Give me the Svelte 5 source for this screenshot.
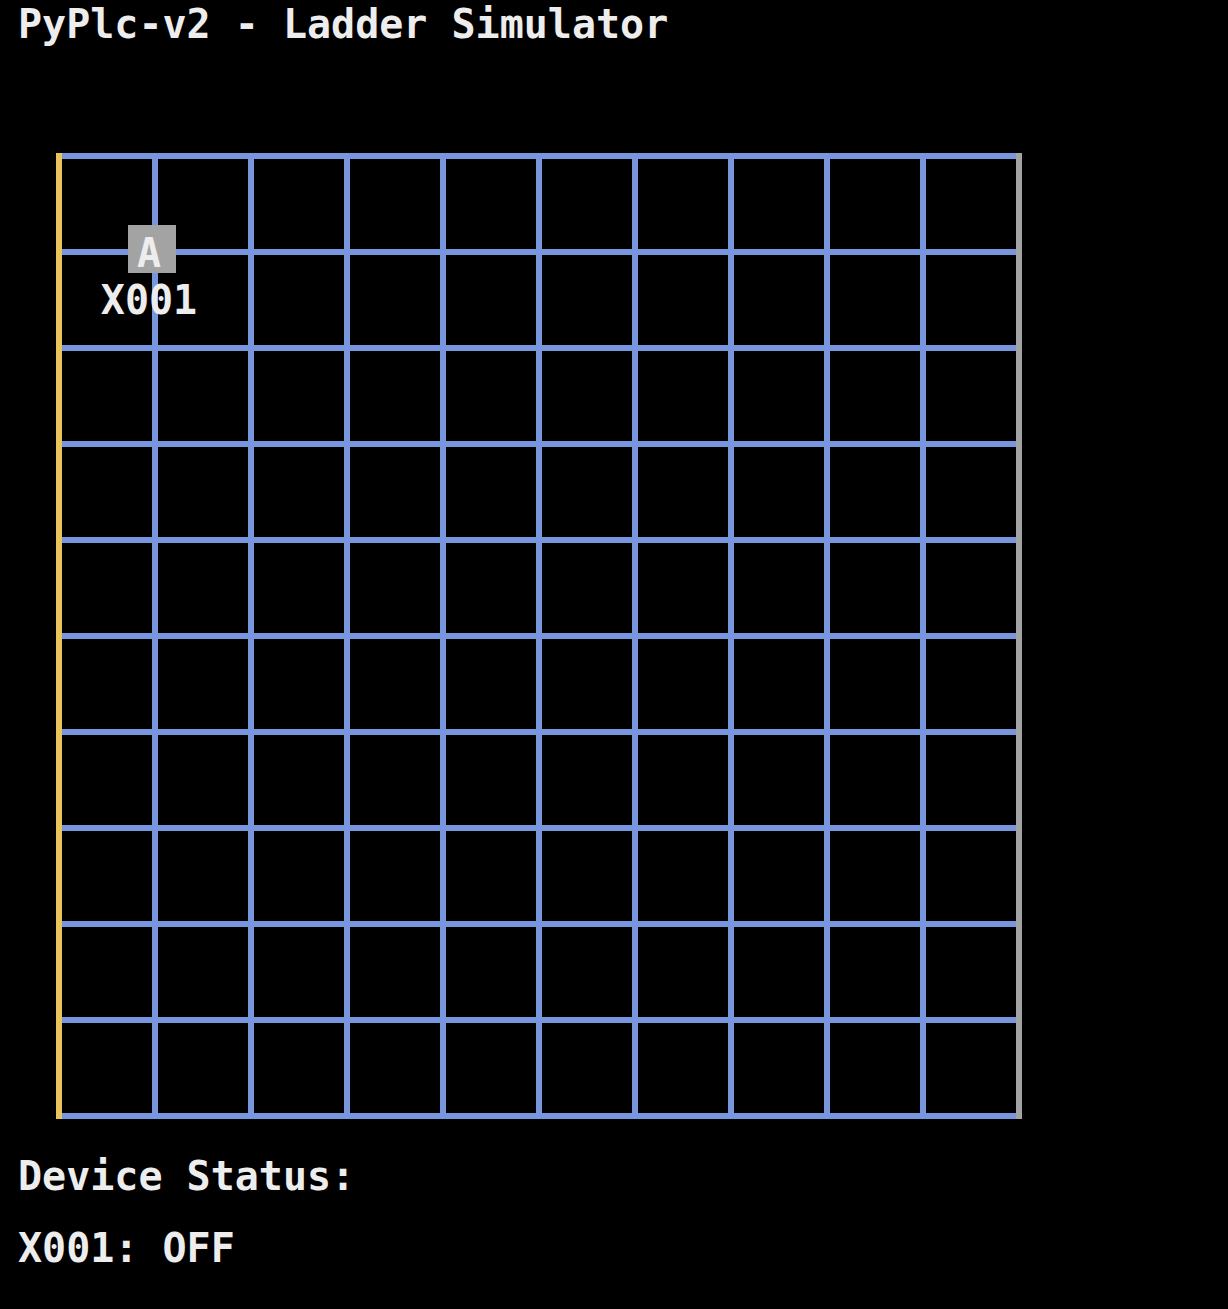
<script>
  const size = 10;
  const cells = Array.from({ length: size * size }, (_, i) => i);
  let devices = $state([{ address: 'X001', symbol: 'A', col: 1, row: 1, on: false }]);
</script>

<svelte:head><title>PyPlc-v2 - Ladder Simulator</title></svelte:head>

<main>
  <h1>PyPlc-v2 - Ladder Simulator</h1>

  <section class="board" aria-label="Ladder grid">
    {#each cells as cell (cell)}
      <div class="cell"></div>
    {/each}
    {#each devices as device (device.address)}
      <div class="device" style="--col: {device.col}; --row: {device.row}">
        <button
          type="button"
          aria-label={`${device.symbol} ${device.address}`}
          aria-pressed={device.on}
          onclick={() => (device.on = !device.on)}>{device.symbol}</button>
        <span class="address">{device.address}</span>
      </div>
    {/each}
  </section>

  <section class="status">
    <h2>Device Status:</h2>
    {#each devices as device (device.address)}
      <p>{device.address}: {device.on ? 'ON' : 'OFF'}</p>
    {/each}
  </section>
</main>

<style>
  :global(body) {
    margin: 0;
    background: #000;
  }

  main {
    box-sizing: border-box;
    min-height: 100vh;
    background: #000;
    color: #ededed;
    font: bold 40px/48px 'DejaVu Sans Mono', monospace;
  }

  h1,
  h2,
  p {
    margin: 0;
    font: inherit;
  }

  h1 {
    padding: 0 18px;
  }

  .board {
    position: relative;
    box-sizing: border-box;
    display: grid;
    grid-template-columns: repeat(10, 1fr);
    gap: 6px;
    margin: 105px 206px 0 56px;
    padding: 6px 0;
    border: solid;
    border-width: 0 6px;
    border-color: transparent #a3a3a3 transparent #e9c35b;
    background: #7696de;
    background-clip: padding-box;
  }

  .cell {
    aspect-ratio: 1;
    background: #000;
  }

  .device {
    position: absolute;
    left: calc((100% + 6px) / 10 * var(--col) - 6px);
    top: calc((100% - 6px) / 10 * var(--row));
    display: flex;
    flex-direction: column;
    align-items: center;
    width: 48px;
    margin: -24px 0 0 -24px;
  }

  button {
    width: 48px;
    height: 48px;
    padding: 8px 6px 0 0;
    border: 0;
    background: #a3a3a3;
    color: inherit;
    font: inherit;
    line-height: 40px;
    cursor: pointer;
  }

  .address {
    margin: 3px 6px 0 0;
  }

  .status {
    display: grid;
    gap: 24px;
    padding: 33px 18px;
  }
</style>
